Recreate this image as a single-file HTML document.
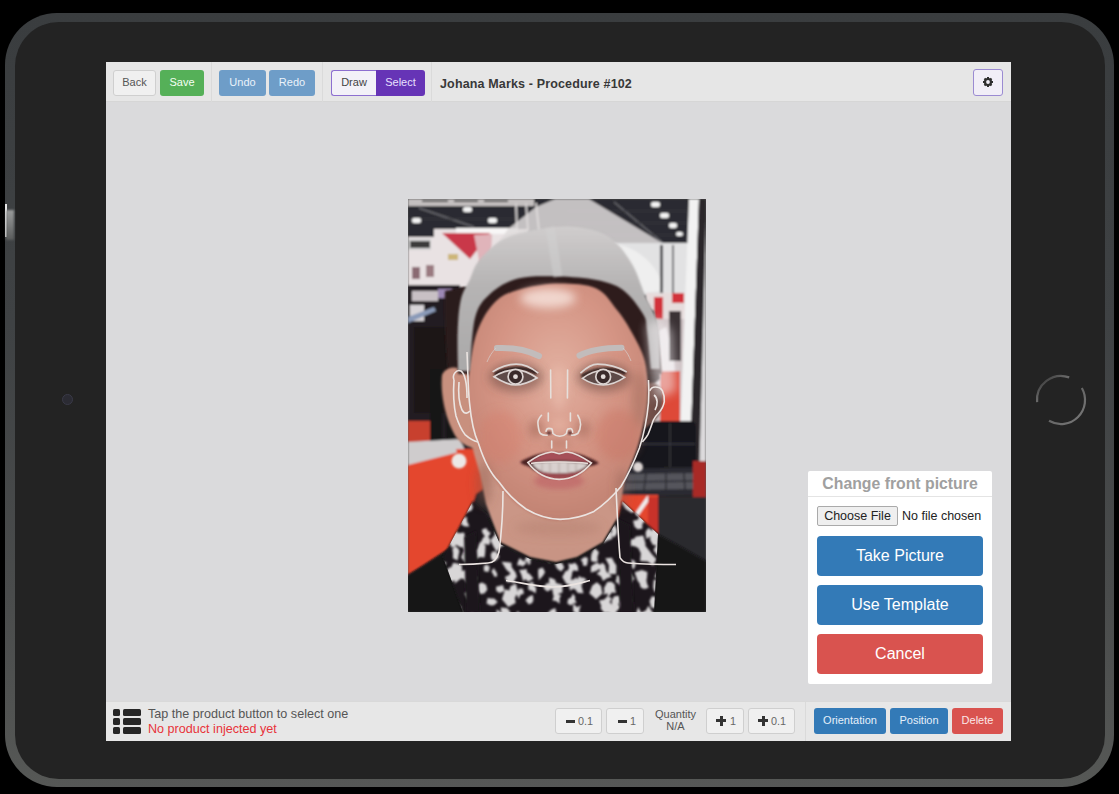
<!DOCTYPE html>
<html><head><meta charset="utf-8">
<style>
*{box-sizing:border-box;margin:0;padding:0}
html,body{width:1119px;height:794px;overflow:hidden;background:#000;font-family:"Liberation Sans",sans-serif}
.abs{position:absolute}
#ipad{position:absolute;left:5px;top:13px;width:1109px;height:774px;border-radius:52px;background:linear-gradient(#3a3d3f,#3f4244 40%,#4a4c4c 75%,#565856);}
#bezel{position:absolute;left:9.5px;top:8.5px;right:9.5px;bottom:8.5px;border-radius:44px;background:#232323}
#screen{position:absolute;left:106px;top:62px;width:905px;height:679px;background:#dadadc;overflow:hidden}
#tb{position:absolute;left:0;top:0;width:905px;height:40px;background:#e6e6e6;border-bottom:1px solid #d6d6d6}
#bb{position:absolute;left:0;top:638.5px;width:905px;height:40.5px;background:#e7e7e7;border-top:1px solid #d9d9d9}
.btn{position:absolute;height:26px;border-radius:3px;font-size:11px;line-height:26px;text-align:center;white-space:nowrap}
.def{background:#f0f0f0;border:1px solid #cfcfcf;color:#555}
.mi{position:absolute;top:11px;width:9px;height:3px;background:#333}
.pl{position:absolute;top:7px;width:10px;height:10px;background:linear-gradient(#333,#333) center/10px 3px no-repeat,linear-gradient(#333,#333) center/3px 10px no-repeat}
.bt{position:absolute;top:0;font-size:10.8px;line-height:25px;color:#666}
.sep{position:absolute;top:0;width:1px;height:40px;background:#dadada}
</style></head><body>
<div id="ipad"><div id="bezel"></div></div>
<div class="abs" style="left:5px;top:204px;width:1.5px;height:33px;background:#e8e8e8"></div>
<div class="abs" style="left:6px;top:210px;width:8px;height:30px;background:linear-gradient(#9a9c9c,#5a5c5c);filter:blur(1px)"></div>
<!-- camera -->
<div class="abs" style="left:62px;top:394px;width:11px;height:11px;border-radius:50%;background:#2b2b33;border:1px solid #3a3a48"></div>
<!-- home button -->
<svg class="abs" style="left:1031px;top:370px" width="60" height="60" viewBox="0 0 60 60"><defs><linearGradient id="hg" x1="0" y1="0" x2="1" y2="1"><stop offset="0" stop-color="#777" stop-opacity="0"/><stop offset="0.45" stop-color="#666"/><stop offset="1" stop-color="#7a7a7a"/></linearGradient></defs><path d="M6.1 32.1 A24 24 0 0 1 38.2 7.4" stroke="url(#hg)" stroke-width="2.2" fill="none" style="filter:blur(0.4px)"/><path d="M50.8 18.0 A24 24 0 0 1 18.0 50.8" stroke="url(#hg)" stroke-width="2.2" fill="none" style="filter:blur(0.4px)"/></svg>

<div id="screen">
  <div id="tb">
    <div class="btn def" style="left:7px;top:8px;width:43px;line-height:23px">Back</div>
    <div class="btn" style="left:54px;top:8px;width:44px;line-height:25px;background:#55b058;color:#f4fff4">Save</div>
    <div class="sep" style="left:105px"></div>
    <div class="btn" style="left:113px;top:8px;width:47px;line-height:25px;background:#6e9dc8;color:#eaf2fa">Undo</div>
    <div class="btn" style="left:163px;top:8px;width:46px;line-height:25px;background:#6e9dc8;color:#eaf2fa">Redo</div>
    <div class="sep" style="left:216px"></div>
    <div class="btn" style="left:225px;top:8px;width:45px;line-height:23px;background:#f3f1f8;border:1px solid #8d6fd0;border-right:none;border-radius:3px 0 0 3px;color:#444">Draw</div>
    <div class="btn" style="left:270px;top:8px;width:49px;line-height:25px;background:#6634b6;border-radius:0 3px 3px 0;color:#e8e0ff">Select</div>
    <div class="sep" style="left:325px"></div>
    <div class="abs" style="left:334px;top:15px;font-size:12.5px;letter-spacing:0.15px;font-weight:bold;color:#383838;white-space:nowrap">Johana Marks - Procedure #102</div>
    <div class="btn" style="left:867px;top:7px;width:30px;height:27px;background:#f1eef7;border:1.5px solid #9b8bd2;border-radius:3px"><svg width="12" height="12" viewBox="0 0 12 12" style="position:absolute;left:8px;top:5.5px"><g fill="#2e2e2e"><rect x="5" y="1" width="2" height="2.6" transform="rotate(0 6 6)"/><rect x="5" y="1" width="2" height="2.6" transform="rotate(45 6 6)"/><rect x="5" y="1" width="2" height="2.6" transform="rotate(90 6 6)"/><rect x="5" y="1" width="2" height="2.6" transform="rotate(135 6 6)"/><rect x="5" y="1" width="2" height="2.6" transform="rotate(180 6 6)"/><rect x="5" y="1" width="2" height="2.6" transform="rotate(225 6 6)"/><rect x="5" y="1" width="2" height="2.6" transform="rotate(270 6 6)"/><rect x="5" y="1" width="2" height="2.6" transform="rotate(315 6 6)"/><circle cx="6" cy="6" r="4.1"/></g><circle cx="6" cy="6" r="1.9" fill="#f1eef7"/></svg></div>
  </div>

  <div id="photo" class="abs" style="left:302px;top:137px;width:298px;height:413px;background:#555;overflow:hidden"><svg width="298" height="413" viewBox="0 0 298 413" style="position:absolute;left:0;top:0">
<defs>
<filter id="b1" x="-10%" y="-10%" width="120%" height="120%"><feGaussianBlur stdDeviation="1.1"/></filter>
<filter id="b2" x="-30%" y="-30%" width="160%" height="160%"><feGaussianBlur stdDeviation="5"/></filter>
<filter id="b3" x="-30%" y="-30%" width="160%" height="160%"><feGaussianBlur stdDeviation="2.5"/></filter>
<radialGradient id="skinG" cx="0.5" cy="0.38" r="0.7">
<stop offset="0" stop-color="#e2b0a0"/><stop offset="0.5" stop-color="#d49484"/><stop offset="1" stop-color="#bc7e6e"/>
</radialGradient>
<linearGradient id="neckG" x1="0" y1="0" x2="0" y2="1">
<stop offset="0" stop-color="#c08a7a"/><stop offset="0.45" stop-color="#cc9888"/><stop offset="1" stop-color="#c89484"/>
</linearGradient>
<linearGradient id="capG" x1="0" y1="0" x2="0" y2="1">
<stop offset="0" stop-color="#d0cdcd"/><stop offset="0.4" stop-color="#b6b4b4"/><stop offset="1" stop-color="#aaa9a9"/>
</linearGradient>
<clipPath id="colc"><path d="M35 358 L65 302 L78 314 L92 345 L122 360 L148 365 L169 360 L195 345 L210 320 L214 302 L250 335 L246 413 L55 413 Z"/></clipPath>
</defs>
<g filter="url(#b1)">
<rect x="0" y="0" width="298" height="413" fill="#262325"/>
<!-- ceiling -->
<rect x="0" y="0" width="298" height="48" fill="#2c2c31"/>
<rect x="0" y="0" width="126" height="7" fill="#c4c0c0"/>
<path d="M14 2 L40 2 M46 2 L70 2 M76 2 L100 2" stroke="#4a4848" stroke-width="2"/>
<path d="M11 9 L66 28 M206 3 L256 45" stroke="#6a6a70" stroke-width="1.4"/>
<path d="M0 20 L120 20 M0 36 L120 36 M160 12 L280 12 M160 24 L280 24 M160 36 L280 36" stroke="#3a3a40" stroke-width="1"/>
<g fill="#f4f4f4">
<rect x="4" y="19" width="9" height="5" rx="2"/><rect x="55" y="8" width="9" height="5" rx="2"/><rect x="80" y="19" width="9" height="5" rx="2"/>
<rect x="243" y="3" width="9" height="5" rx="2"/><rect x="252" y="14" width="9" height="5" rx="2"/><rect x="261" y="24" width="8" height="5" rx="2"/><rect x="268" y="33" width="7" height="4" rx="2"/>
</g>
<!-- truss -->
<path d="M108 4 L109 32 M118 4 L120 32 M128 4 L131 32" stroke="#d4d0d0" stroke-width="2"/>
<!-- left booth wall -->
<rect x="0" y="30" width="120" height="58" fill="#e9e2e3"/>
<rect x="48" y="29" width="62" height="6" fill="#f8f6f6"/>
<rect x="0" y="30" width="26" height="8" fill="#2c2c31"/>
<rect x="0" y="40" width="23" height="11" fill="#d2d2d2"/>
<rect x="2" y="42" width="20" height="7" fill="#3a3a3a"/>
<path d="M34 34 L82 34 L62 60 Z" fill="#c9384a"/>
<path d="M66 36 L84 35 L83 62 L72 66 Z" fill="#e0b4ba"/>
<rect x="4" y="68" width="8" height="12" fill="#8a6a72"/>
<rect x="18" y="66" width="8" height="12" fill="#9a7a80"/>
<rect x="40" y="55" width="10" height="6" fill="#cdb678"/>
<!-- halo over ceiling -->
<path d="M86 50 L100 30 L128 8 L147 0 L181 0 L256 45 L256 90 L86 90 Z" fill="#dedadb" opacity="0.85"/>
<!-- left rack dark -->
<rect x="0" y="86" width="52" height="172" fill="#241f22"/>
<rect x="4" y="92" width="26" height="10" fill="#c8c0c4"/>
<rect x="30" y="90" width="14" height="9" fill="#9c88b4"/>
<rect x="2" y="106" width="14" height="16" fill="#d8d4d8"/>
<path d="M0 118 L26 108 L28 112 L0 124 Z" fill="#8a9ab8"/>
<rect x="6" y="128" width="44" height="86" fill="#1a1719"/>
<rect x="0" y="222" width="24" height="22" fill="#c8402e"/>
<rect x="22" y="170" width="12" height="84" fill="#141213"/>
<rect x="38" y="170" width="12" height="84" fill="#141213"/>
<!-- floor -->
<path d="M0 243 L52 240 L58 254 L0 270 Z" fill="#cfcccd"/>
<path d="M0 266 L55 252 L71 286 L63 310 L42 349 L16 366 L0 376 Z" fill="#e4472f"/>
<path d="M48 250 L75 250 L75 290 L60 300 Z" fill="#e4472f"/>
<!-- right hall -->
<rect x="205" y="44" width="78" height="52" fill="#e2e2e3"/>
<path d="M205 44 C235 50 252 70 256 92 L205 96 Z" fill="#efefef"/>
<rect x="252" y="46" width="3" height="50" fill="#4a4a4e"/>
<rect x="264" y="46" width="2" height="50" fill="#6a6a6e"/>
<rect x="238" y="94" width="40" height="30" fill="#e6dcdc"/>
<rect x="246" y="98" width="9" height="26" fill="#d2333a"/>
<rect x="264" y="94" width="12" height="10" fill="#d2333a"/>
<rect x="238" y="120" width="40" height="104" fill="#cfc4c6"/>
<path d="M240 138 L258 128 L266 160 L268 192 L244 200 Z" fill="#eeeaec"/>
<rect x="261" y="112" width="12" height="50" fill="#3a3236"/>
<rect x="252" y="172" width="20" height="54" fill="#de4a38"/>
<!-- pillar -->
<path d="M281 0 L291 0 L282 262 L271 262 Z" fill="#f2f2f2"/>
<path d="M291 0 L298 0 L298 20 L291.5 262 L282 262 Z" fill="#2c282b"/>
<path d="M298 20 L298 262 L291.5 262 Z" fill="#dcdadc"/>
<!-- chair -->
<path d="M230 226 C232 222 236 222 240 222 L282 222 C286 222 288 224 288 228 L288 270 L224 270 Z" fill="#19191c"/>
<path d="M262 224 L262 268 M232 245 L287 245" stroke="#3a3a40" stroke-width="1.4"/>
<path d="M216 270 L289 268 L290 296 L212 298 Z" fill="#2a2a30"/>
<path d="M220 275 L288 274 L289 290 L216 291 Z" fill="#54545c"/>
<path d="M238 274 L236 291 M258 274 L258 291 M276 274 L277 291 M218 283 L289 282" stroke="#2c2c32" stroke-width="1.5"/>
<rect x="285" y="262" width="13" height="38" fill="#a82a28"/>
<!-- right floor -->
<rect x="209" y="296" width="41" height="40" fill="#e4472f"/>
<path d="M222 325 L241 298" stroke="#f0f0f0" stroke-width="4"/>
<rect x="240" y="298" width="10" height="38" fill="#c9302a"/>
<rect x="250" y="298" width="48" height="64" fill="#29292d"/>
</g>
<!-- hair back -->
<g filter="url(#b1)">
<path d="M37 92 C36 120 38 150 40 175 L62 175 L66 120 L58 88 Z" fill="#2c1c1c"/>
<path d="M229 105 L246 112 L252 180 L240 190 L232 150 Z" fill="#2c1c1c"/>
</g>
<!-- black jacket -->
<g filter="url(#b1)">
<path d="M0 376 L16 366 L42 349 L65 312 L100 330 L150 362 L212 318 L240 330 L270 346 L298 362 L298 413 L0 413 Z" fill="#141315"/>
</g>
<!-- neck -->
<g filter="url(#b1)">
<path d="M60 228 L66 255 L72 275 L78 305 L92 343 L122 358 L148 363 L169 358 L195 343 L210 318 L215 292 L222 250 Z" fill="url(#neckG)"/>
</g>
<!-- collar -->
<g filter="url(#b1)">
<path d="M35 358 L65 302 L78 314 L92 345 L122 360 L148 365 L169 360 L195 345 L210 320 L214 302 L250 335 L246 413 L55 413 Z" fill="#1b191b"/>
</g>
<g clip-path="url(#colc)"><g fill="#d8d6d7" filter="url(#b1)"><path d="M35.0 288.3 L35.3 297.2 L32.0 300.6 L28.2 301.2 L24.7 296.7 L26.2 287.2 Z"/><path d="M22.5 313.5 L18.2 309.2 L20.3 303.4 L18.1 297.5 L23.4 299.2 L27.4 296.7 L27.4 302.1 L26.6 304.7 L28.1 312.1 Z"/><path d="M35.9 350.8 L29.7 344.7 L22.0 342.3 L27.2 335.4 L31.8 335.9 L36.5 335.5 L41.2 342.7 Z"/><path d="M35.4 369.1 L32.7 371.7 L28.5 374.1 L27.8 368.4 L26.4 364.3 L29.9 362.9 L32.8 362.4 L38.6 363.4 Z"/><path d="M22.8 382.1 L24.1 377.5 L24.2 375.3 L25.5 373.1 L29.5 368.3 L29.7 375.0 L33.1 378.7 L31.3 384.3 L26.3 386.3 Z"/><path d="M19.9 385.2 L26.7 384.0 L30.7 387.6 L31.3 393.8 L26.2 401.2 L22.9 392.6 Z"/><path d="M25.3 402.4 L23.8 398.9 L25.2 396.2 L27.7 395.5 L31.8 397.7 L30.7 404.8 Z"/><path d="M42.2 300.8 L44.0 303.7 L42.3 306.3 L42.2 312.0 L39.4 307.3 L36.4 306.6 L35.3 301.9 L39.6 302.1 Z"/><path d="M47.1 324.8 L42.8 322.6 L38.9 319.2 L42.7 315.4 L49.0 310.2 L51.4 319.4 Z"/><path d="M43.6 348.6 L42.2 345.6 L40.8 342.7 L41.2 336.8 L46.3 336.2 L49.0 340.8 L48.9 345.3 L46.5 347.7 Z"/><path d="M41.2 368.6 L46.9 368.2 L48.6 374.5 L50.4 380.3 L45.3 381.9 L41.2 383.1 L36.3 379.8 L37.1 372.9 Z"/><path d="M40.3 405.6 L39.0 403.8 L38.4 400.9 L40.3 398.2 L42.8 399.7 L44.0 401.9 L44.1 404.4 L43.0 408.6 Z"/><path d="M53.5 409.0 L49.8 414.7 L46.3 418.2 L42.7 415.3 L36.7 415.7 L35.1 408.6 L40.3 404.9 L44.4 401.6 L49.4 403.7 Z"/><path d="M46.9 303.2 L42.3 301.4 L44.7 296.0 L43.3 289.4 L48.6 292.4 L52.4 291.3 L54.7 295.4 L51.8 298.9 L51.2 304.5 Z"/><path d="M61.4 327.4 L56.8 327.5 L53.5 325.8 L53.4 321.7 L55.5 319.1 L59.0 317.8 L59.0 322.3 Z"/><path d="M56.0 333.4 L57.6 339.3 L59.2 346.8 L52.9 348.5 L48.8 346.3 L46.2 343.5 L44.2 338.9 L44.7 331.3 L50.9 334.3 Z"/><path d="M45.0 353.9 L44.4 350.0 L47.2 347.0 L50.3 349.5 L51.5 352.3 L50.8 355.1 L49.7 361.5 L44.9 359.3 Z"/><path d="M45.2 363.7 L50.4 364.7 L53.8 366.2 L54.0 370.3 L53.1 373.7 L50.1 379.6 L46.9 373.9 L42.5 369.9 Z"/><path d="M52.9 379.6 L46.5 384.7 L47.7 376.7 L44.5 369.7 L51.5 370.9 L54.1 371.8 L59.8 370.9 L62.8 377.8 L56.1 380.1 Z"/><path d="M52.4 411.0 L54.3 412.2 L54.5 414.7 L56.6 419.7 L52.3 418.5 L49.4 419.4 L47.9 416.2 L47.3 412.5 L49.6 409.7 Z"/><path d="M56.0 292.3 L60.0 294.0 L62.6 293.2 L65.4 296.1 L64.6 301.2 L60.4 299.8 L58.8 298.5 L55.5 297.0 Z"/><path d="M60.7 303.5 L63.4 304.5 L65.0 307.9 L63.6 311.4 L60.8 312.6 L57.2 313.9 L56.7 309.3 L56.7 306.4 L57.3 302.1 Z"/><path d="M53.9 341.4 L57.7 339.1 L61.2 340.1 L62.9 343.1 L66.5 346.7 L64.9 352.8 L59.7 355.7 L55.9 350.9 L54.4 346.5 Z"/><path d="M60.8 350.5 L61.6 355.7 L63.3 360.8 L57.8 363.9 L53.1 358.4 L55.8 351.9 Z"/><path d="M69.3 379.1 L65.3 385.1 L60.4 384.7 L57.3 382.0 L53.2 375.3 L60.3 375.3 L63.9 375.0 Z"/><path d="M65.3 385.2 L67.8 390.7 L69.2 394.7 L65.8 396.6 L61.6 395.6 L61.8 390.1 Z"/><path d="M56.5 394.1 L61.7 392.3 L67.9 389.5 L68.8 397.4 L65.3 401.3 L62.1 401.2 L59.0 399.8 Z"/><path d="M56.6 420.6 L58.5 416.6 L61.0 415.3 L64.2 413.3 L68.2 416.4 L64.6 420.5 L64.3 428.5 L58.9 425.3 Z"/><path d="M75.9 289.8 L82.9 291.3 L77.3 296.7 L73.7 298.5 L65.3 296.4 L69.4 286.7 Z"/><path d="M76.0 335.9 L74.5 334.0 L73.8 330.8 L76.4 329.6 L78.7 329.3 L79.7 331.7 L82.8 334.0 L80.7 337.2 L77.9 339.3 Z"/><path d="M79.2 336.4 L81.8 339.7 L82.2 342.7 L81.3 346.1 L78.5 345.3 L72.2 344.8 L75.2 338.5 Z"/><path d="M68.3 360.3 L67.0 355.8 L63.8 351.2 L69.1 350.2 L72.0 343.0 L77.5 346.3 L77.2 353.2 L76.5 358.5 L71.9 358.1 Z"/><path d="M76.0 372.2 L75.7 367.5 L77.7 365.7 L79.5 366.0 L81.8 368.0 L80.6 372.9 Z"/><path d="M79.3 390.8 L76.3 394.4 L72.2 394.9 L69.6 390.9 L69.5 385.1 L74.2 383.4 L78.1 385.7 Z"/><path d="M73.2 422.6 L70.6 421.8 L66.3 420.5 L66.8 414.4 L71.6 414.4 L75.4 415.3 L76.3 420.1 Z"/><path d="M91.8 285.9 L88.8 291.4 L87.8 298.5 L83.3 293.2 L79.1 292.0 L77.8 285.8 L82.0 281.3 L87.1 282.5 Z"/><path d="M88.6 303.2 L86.7 310.4 L85.0 316.2 L79.5 314.1 L80.3 308.3 L82.6 305.2 Z"/><path d="M83.3 307.4 L90.6 308.2 L93.4 311.2 L97.8 315.3 L94.1 320.9 L88.1 321.9 L85.3 315.8 Z"/><path d="M95.5 329.0 L95.0 334.2 L92.3 336.3 L91.0 339.3 L87.3 340.1 L87.1 335.4 L86.5 332.4 L88.9 331.3 L91.1 328.7 Z"/><path d="M88.9 352.9 L85.7 347.9 L82.4 341.3 L87.5 334.9 L95.4 335.7 L99.4 344.3 L92.4 348.2 Z"/><path d="M84.3 352.4 L87.5 352.4 L89.4 354.5 L91.3 357.7 L89.0 360.6 L85.9 362.6 L83.3 359.6 L82.7 355.8 Z"/><path d="M89.2 377.6 L86.3 377.8 L85.2 375.3 L83.4 372.5 L85.7 369.0 L87.9 372.6 L89.0 374.2 Z"/><path d="M91.7 394.1 L88.3 392.0 L88.0 387.7 L91.0 386.9 L95.0 386.0 L96.6 392.1 Z"/><path d="M78.5 404.6 L79.5 399.0 L83.7 399.5 L86.2 399.6 L89.7 403.1 L86.0 406.2 L82.7 406.5 Z"/><path d="M88.2 416.3 L88.8 410.3 L92.6 413.2 L93.1 416.9 L98.3 420.7 L92.2 420.9 L90.2 425.1 L87.1 422.7 L83.4 419.2 Z"/><path d="M97.6 285.4 L99.8 289.1 L102.6 292.3 L100.6 296.8 L96.7 297.5 L92.7 296.3 L95.0 291.5 L94.6 288.0 Z"/><path d="M97.7 306.2 L93.5 309.3 L89.7 303.2 L94.9 300.0 L99.6 297.0 L100.2 303.5 Z"/><path d="M102.3 315.3 L105.7 311.5 L109.5 314.8 L111.7 320.6 L105.7 321.9 L103.9 328.0 L99.4 325.7 L97.6 320.8 L98.2 315.8 Z"/><path d="M94.1 327.3 L100.4 323.5 L106.5 323.6 L109.0 331.5 L103.7 336.6 L98.7 333.6 Z"/><path d="M103.6 367.9 L107.9 374.2 L101.6 373.5 L99.2 371.6 L97.6 369.4 L93.6 362.8 L99.9 363.2 L103.5 363.7 Z"/><path d="M96.8 378.1 L101.6 375.7 L103.8 369.5 L107.6 373.7 L108.9 377.7 L106.6 380.4 L106.2 384.2 L103.4 383.1 L99.2 383.2 Z"/><path d="M107.8 384.5 L109.7 391.5 L107.3 398.8 L102.2 394.6 L101.4 390.9 L102.4 387.2 Z"/><path d="M97.2 390.2 L104.4 392.4 L106.5 396.9 L107.7 404.1 L100.3 408.0 L93.9 400.2 Z"/><path d="M97.9 417.8 L93.7 415.6 L92.6 408.4 L98.7 409.1 L101.0 411.0 L102.2 413.6 L102.2 418.9 Z"/><path d="M108.4 287.5 L112.1 285.8 L116.1 289.7 L115.2 296.8 L109.4 296.1 L104.3 298.0 L102.6 291.9 L102.6 285.2 Z"/><path d="M114.4 315.4 L116.6 314.4 L118.5 316.8 L119.3 321.2 L115.6 322.6 L112.8 320.5 L112.4 317.1 Z"/><path d="M104.2 340.2 L105.3 333.1 L107.5 329.1 L111.1 330.8 L116.1 335.7 L111.4 343.0 Z"/><path d="M113.5 350.9 L108.5 351.5 L103.8 348.6 L105.8 342.4 L111.0 337.7 L116.4 343.7 Z"/><path d="M119.0 363.9 L116.2 365.9 L114.8 367.7 L113.1 366.4 L109.1 366.2 L110.1 362.2 L111.7 358.9 L114.6 361.4 L115.9 362.2 Z"/><path d="M113.3 375.7 L111.2 371.0 L115.7 370.5 L118.6 370.0 L119.2 373.5 L119.6 377.9 L115.2 382.3 Z"/><path d="M112.3 396.1 L110.7 400.3 L109.2 396.2 L105.9 394.2 L109.6 392.7 L111.0 389.6 L114.9 389.8 L116.0 394.5 Z"/><path d="M112.6 415.8 L112.3 420.9 L108.1 420.9 L107.3 417.6 L107.4 415.2 L110.0 411.9 Z"/><path d="M128.7 304.5 L122.4 304.1 L120.4 295.7 L126.0 289.5 L131.5 294.2 L135.3 301.3 Z"/><path d="M114.8 320.1 L114.5 313.2 L119.8 312.8 L123.1 312.5 L124.0 316.2 L123.5 320.3 L120.0 320.4 Z"/><path d="M119.3 323.9 L123.0 322.4 L123.3 327.2 L122.4 333.0 L116.4 332.7 L115.4 325.9 Z"/><path d="M125.3 340.8 L125.8 342.8 L124.9 345.4 L122.5 344.7 L119.3 343.8 L120.6 340.2 L121.8 336.4 L124.5 339.1 Z"/><path d="M131.4 358.5 L128.3 359.5 L123.8 358.4 L125.7 353.1 L129.2 351.9 L133.5 353.7 Z"/><path d="M122.7 364.2 L120.5 366.2 L119.4 362.7 L116.1 362.3 L117.6 359.4 L119.1 357.3 L121.6 356.8 L124.2 358.3 L122.2 361.5 Z"/><path d="M115.4 375.0 L119.0 373.7 L121.5 374.8 L125.5 379.6 L120.2 382.7 L116.7 379.5 Z"/><path d="M120.2 385.3 L124.4 382.5 L126.7 386.8 L128.2 389.4 L127.7 394.3 L124.0 391.9 L120.4 390.7 Z"/><path d="M117.4 401.3 L120.9 397.6 L124.9 396.1 L125.4 401.0 L124.2 403.9 L120.8 405.5 Z"/><path d="M133.0 301.5 L127.4 295.3 L129.2 288.1 L134.2 283.5 L137.6 289.5 L137.4 294.8 Z"/><path d="M130.2 307.2 L134.5 306.0 L136.8 307.6 L139.2 309.8 L138.5 314.4 L134.6 315.2 L131.2 312.6 Z"/><path d="M128.7 314.5 L130.1 308.7 L132.7 314.2 L133.7 316.1 L136.6 319.5 L132.6 320.0 L130.8 320.2 L127.7 320.6 L125.7 317.1 Z"/><path d="M143.4 331.5 L138.3 330.7 L135.2 329.5 L135.6 325.8 L133.0 319.8 L138.0 318.9 L143.7 318.7 L143.6 325.5 Z"/><path d="M130.3 369.9 L134.7 368.6 L137.1 373.1 L135.0 376.8 L130.8 381.3 L130.1 374.5 Z"/><path d="M140.0 392.5 L137.8 391.4 L135.4 388.8 L137.4 385.8 L139.4 383.7 L141.8 385.0 L144.5 386.3 L144.9 390.0 L141.8 391.1 Z"/><path d="M155.1 290.6 L157.0 297.6 L150.8 297.0 L148.8 292.7 L147.4 286.4 L153.7 282.8 Z"/><path d="M142.9 306.6 L146.0 306.6 L147.3 310.0 L145.7 312.6 L143.9 313.7 L140.1 316.4 L139.3 311.6 L138.2 306.2 Z"/><path d="M149.2 338.5 L145.7 339.5 L143.4 337.7 L138.8 337.4 L140.3 332.7 L142.9 330.8 L145.6 327.1 L151.3 327.2 L153.8 334.0 Z"/><path d="M149.0 348.1 L144.0 349.4 L141.0 346.8 L141.5 343.0 L144.0 339.9 L149.0 341.3 Z"/><path d="M142.7 349.8 L145.6 348.9 L151.7 346.5 L153.1 353.5 L148.0 356.7 L146.3 360.2 L141.1 363.8 L138.2 357.8 L140.1 352.4 Z"/><path d="M150.9 363.6 L154.1 364.1 L156.3 368.6 L153.2 372.4 L149.9 370.2 L148.2 368.3 L146.8 363.7 Z"/><path d="M141.1 378.5 L144.7 379.6 L147.4 381.0 L148.2 385.3 L145.2 388.9 L141.7 386.5 L141.0 383.0 Z"/><path d="M150.0 395.0 L145.3 396.8 L144.3 390.4 L147.4 383.7 L154.4 385.7 L154.5 393.6 Z"/><path d="M148.0 401.9 L144.4 401.4 L145.7 397.2 L147.0 395.0 L148.6 389.8 L150.4 395.4 L153.2 396.3 L151.6 399.0 L151.7 404.7 Z"/><path d="M142.2 424.1 L140.6 419.2 L139.7 414.2 L143.0 410.8 L147.3 408.9 L148.6 414.7 L151.2 417.5 L147.7 419.3 L146.8 425.6 Z"/><path d="M169.8 288.0 L166.3 291.4 L164.6 293.3 L161.6 295.4 L158.1 293.2 L158.8 288.5 L161.4 286.7 L163.3 283.7 L168.0 282.7 Z"/><path d="M164.0 298.0 L167.5 300.5 L167.2 304.9 L164.4 309.3 L161.1 305.4 L160.1 300.5 Z"/><path d="M157.8 319.5 L157.6 316.6 L160.1 315.8 L161.5 318.2 L161.8 320.4 L160.8 322.2 L158.5 325.9 L155.2 323.3 Z"/><path d="M161.3 318.8 L164.9 322.8 L165.6 329.2 L161.2 332.8 L157.4 329.2 L151.4 332.2 L148.8 325.7 L154.8 322.5 L157.3 321.9 Z"/><path d="M154.5 342.1 L154.1 340.1 L155.0 338.0 L158.3 335.2 L159.2 339.9 L159.7 344.3 L156.0 343.3 Z"/><path d="M154.2 352.4 L151.0 348.0 L154.0 341.0 L160.9 342.3 L165.7 349.0 L162.4 356.8 L156.1 360.2 Z"/><path d="M163.8 365.0 L167.1 363.7 L169.8 366.9 L170.3 372.1 L165.3 371.6 L162.7 376.5 L158.4 374.1 L161.1 368.7 L160.2 364.4 Z"/><path d="M162.8 381.3 L162.3 386.1 L158.5 384.9 L156.9 382.4 L154.2 377.9 L157.9 371.5 L164.2 374.4 Z"/><path d="M169.1 385.4 L166.2 389.1 L161.9 391.8 L161.3 386.1 L161.9 381.6 L166.6 379.8 Z"/><path d="M167.0 400.7 L168.6 404.1 L165.6 404.3 L162.9 406.5 L159.3 404.6 L160.1 400.0 L163.1 398.6 L164.9 394.5 L167.2 397.7 Z"/><path d="M166.1 300.5 L165.2 293.2 L164.9 286.8 L170.0 288.8 L175.6 291.3 L174.2 300.6 Z"/><path d="M165.9 311.3 L162.6 309.6 L162.1 305.1 L162.5 299.3 L167.3 300.0 L171.8 299.6 L174.0 304.6 L172.2 309.3 L168.4 309.2 Z"/><path d="M175.1 317.5 L172.3 319.0 L168.7 322.0 L166.5 317.6 L168.0 313.8 L166.4 307.4 L171.3 309.2 L175.5 308.7 L176.3 313.7 Z"/><path d="M161.6 329.1 L163.7 324.5 L166.5 322.1 L168.8 324.7 L171.9 326.0 L172.9 331.0 L168.6 331.9 L166.1 330.3 Z"/><path d="M178.4 335.9 L179.4 338.3 L179.1 341.7 L176.3 343.0 L174.6 340.2 L172.9 338.2 L173.2 334.3 L176.4 336.0 Z"/><path d="M175.1 366.7 L174.5 362.9 L172.6 360.8 L174.8 359.3 L176.7 358.1 L179.8 358.8 L179.7 362.6 L178.8 366.8 Z"/><path d="M178.7 381.3 L175.0 383.2 L173.9 385.9 L171.7 384.7 L167.8 384.0 L170.0 380.2 L170.8 376.8 L173.6 378.7 L175.9 378.6 Z"/><path d="M167.1 390.2 L160.6 388.6 L167.1 384.8 L167.0 378.3 L171.2 380.8 L173.2 383.9 L173.5 387.1 L175.5 394.3 L169.8 393.9 Z"/><path d="M172.9 406.2 L171.3 410.7 L171.3 412.9 L170.3 416.8 L167.8 413.9 L165.4 412.9 L165.1 409.7 L165.2 404.5 L169.1 408.2 Z"/><path d="M182.2 316.6 L186.6 318.2 L184.4 323.2 L183.2 326.4 L180.0 327.5 L172.3 328.6 L175.8 320.7 L178.5 317.1 Z"/><path d="M186.3 363.1 L183.0 362.1 L183.0 358.1 L183.6 354.6 L186.6 349.0 L190.9 353.1 L189.4 358.3 L189.8 362.5 Z"/><path d="M182.8 373.4 L183.0 367.4 L186.0 365.2 L189.2 363.4 L192.9 366.4 L190.4 370.7 L187.7 372.2 Z"/><path d="M184.3 386.5 L188.9 383.2 L193.1 387.1 L194.5 394.6 L188.1 400.2 L181.3 394.3 Z"/><path d="M193.6 305.7 L189.6 305.3 L190.2 300.5 L190.2 294.8 L194.3 298.0 L198.7 299.0 L195.7 303.0 Z"/><path d="M201.4 316.0 L203.6 322.1 L198.8 324.4 L196.0 325.5 L192.3 323.6 L192.3 317.9 L196.7 317.7 Z"/><path d="M192.7 336.0 L188.8 331.1 L190.5 324.3 L195.8 325.0 L198.4 328.8 L197.8 334.3 Z"/><path d="M197.1 331.8 L202.4 333.0 L204.4 339.8 L199.0 341.8 L195.5 344.1 L194.2 339.4 L192.5 334.1 Z"/><path d="M192.1 365.5 L194.5 363.7 L197.0 366.3 L198.2 372.8 L192.6 372.3 L190.5 368.4 Z"/><path d="M198.7 373.1 L204.0 377.6 L198.5 379.6 L195.0 381.9 L193.0 377.6 L188.6 374.8 L192.5 371.4 L194.6 367.8 L197.6 370.5 Z"/><path d="M197.8 386.2 L201.1 386.5 L201.6 390.3 L203.4 393.1 L201.7 396.1 L198.9 394.3 L195.6 396.0 L196.3 392.1 L195.9 389.1 Z"/><path d="M193.2 406.9 L191.1 401.6 L196.2 400.5 L199.2 397.4 L203.8 398.9 L201.0 404.6 L203.2 409.6 L199.3 411.5 L195.7 410.1 Z"/><path d="M206.0 408.4 L205.1 415.3 L199.7 413.7 L196.1 414.1 L192.5 408.9 L196.1 402.6 L202.2 403.4 Z"/><path d="M208.8 284.4 L213.7 288.6 L216.2 292.8 L216.3 298.5 L212.1 301.4 L209.1 297.3 L202.5 296.6 L206.8 291.4 Z"/><path d="M208.0 301.9 L209.8 308.2 L204.5 310.2 L201.4 306.4 L197.0 304.3 L195.6 296.4 L202.6 297.3 L206.8 297.0 Z"/><path d="M206.8 325.5 L208.9 330.3 L209.2 333.3 L208.2 336.0 L205.6 338.6 L202.9 336.0 L203.7 332.6 L203.5 328.9 Z"/><path d="M200.4 375.1 L201.0 366.3 L197.3 359.2 L203.9 358.8 L206.2 363.2 L208.4 366.4 L208.2 375.1 Z"/><path d="M208.4 380.2 L208.7 376.5 L211.8 376.8 L213.1 379.7 L215.1 383.4 L212.3 386.3 L209.4 384.0 L207.4 382.6 Z"/><path d="M208.0 394.0 L203.9 393.6 L199.2 399.5 L199.9 391.5 L196.9 387.7 L199.2 383.1 L203.6 382.7 L206.8 385.4 L207.0 389.4 Z"/><path d="M212.3 403.0 L209.1 406.4 L203.9 407.9 L203.8 401.5 L206.2 397.3 L211.4 396.8 Z"/><path d="M208.2 412.7 L208.1 419.3 L203.3 417.2 L201.9 412.9 L200.0 408.2 L204.7 408.3 L208.6 403.5 L212.5 408.2 Z"/><path d="M216.7 298.5 L213.5 296.5 L209.1 293.5 L212.8 289.5 L216.6 286.3 L223.4 288.3 L223.6 297.6 Z"/><path d="M213.6 303.6 L218.8 298.4 L221.7 290.4 L226.2 297.3 L232.4 301.1 L229.9 309.1 L223.9 313.9 L217.7 310.0 Z"/><path d="M220.9 347.8 L219.2 343.9 L221.9 341.3 L224.0 340.0 L226.8 340.4 L227.3 343.7 L227.6 347.8 L224.1 346.8 Z"/><path d="M226.9 362.3 L227.6 365.8 L225.9 370.1 L222.0 368.7 L222.1 364.7 L220.3 359.9 L224.5 360.8 Z"/><path d="M218.3 380.7 L217.2 377.0 L216.8 371.6 L221.4 371.5 L223.2 375.1 L226.4 379.7 L222.4 384.3 Z"/><path d="M219.7 405.2 L218.0 407.8 L214.2 409.1 L211.4 405.0 L214.7 401.5 L216.5 399.7 L219.4 399.2 L224.0 401.5 Z"/><path d="M242.1 295.0 L236.1 296.7 L230.2 294.9 L229.6 287.6 L232.8 281.3 L239.4 280.7 L244.2 286.9 Z"/><path d="M231.4 305.8 L238.4 302.7 L236.3 311.4 L234.5 317.5 L228.2 316.3 L228.3 309.3 Z"/><path d="M232.1 325.2 L229.2 323.6 L230.0 319.9 L231.0 317.7 L232.7 316.3 L236.3 314.3 L237.4 318.5 L236.5 321.9 L234.9 324.5 Z"/><path d="M225.0 321.8 L230.0 320.7 L234.3 323.2 L234.3 329.7 L229.3 330.2 L226.5 327.5 Z"/><path d="M235.3 336.6 L237.7 345.3 L233.3 351.2 L228.7 348.2 L222.9 343.8 L227.9 337.5 Z"/><path d="M236.4 345.1 L238.3 347.9 L241.3 351.7 L237.1 353.1 L233.4 355.0 L230.8 350.5 L233.6 346.9 Z"/><path d="M226.6 373.3 L233.8 370.9 L239.4 372.9 L238.9 379.2 L237.3 383.0 L233.0 386.5 L229.5 381.5 Z"/><path d="M233.8 383.1 L235.3 382.8 L238.4 380.5 L238.9 384.2 L240.7 388.4 L237.1 389.9 L234.4 389.4 L232.3 387.7 L231.9 384.7 Z"/><path d="M234.3 415.8 L238.3 421.2 L233.4 429.3 L224.6 425.6 L227.5 416.5 L230.2 407.9 Z"/><path d="M253.0 291.9 L252.4 295.8 L249.2 296.3 L245.3 299.5 L245.5 293.8 L240.9 289.7 L246.4 288.7 L248.8 287.7 L254.4 285.4 Z"/><path d="M248.9 311.7 L245.6 307.1 L241.9 306.6 L240.7 301.4 L245.3 300.7 L247.4 302.1 L250.1 302.8 L251.7 307.2 Z"/><path d="M251.3 316.5 L249.2 318.8 L246.2 322.2 L243.5 318.2 L243.4 313.2 L247.2 311.7 L250.3 312.9 Z"/><path d="M240.8 328.7 L244.2 332.2 L242.8 337.3 L238.5 339.9 L237.6 334.5 L238.1 331.7 Z"/><path d="M252.2 329.7 L252.8 335.7 L250.7 339.2 L250.4 346.3 L244.9 346.1 L242.1 341.0 L242.5 336.3 L243.7 332.2 L247.0 325.8 Z"/><path d="M244.1 355.6 L248.4 360.2 L244.9 366.8 L239.9 362.5 L232.1 362.1 L233.0 352.2 L240.7 351.0 Z"/><path d="M250.6 391.8 L246.6 393.0 L245.2 388.5 L245.3 385.4 L245.8 380.8 L249.8 380.9 L253.2 383.5 L252.2 388.0 Z"/><path d="M249.9 409.5 L243.1 408.5 L241.5 401.9 L243.9 397.2 L248.1 397.9 L249.9 401.9 Z"/><path d="M239.1 421.2 L234.9 419.0 L233.6 413.4 L237.8 411.4 L240.4 406.8 L243.0 411.1 L245.7 415.0 L242.3 418.1 Z"/><path d="M252.4 291.6 L255.0 294.3 L257.1 296.4 L256.4 300.4 L252.9 301.3 L249.1 299.5 L251.6 295.5 Z"/><path d="M267.4 310.5 L262.7 316.2 L257.1 316.5 L251.5 310.6 L256.9 304.3 L263.1 303.9 Z"/><path d="M267.4 317.6 L260.3 320.4 L258.4 322.1 L255.0 323.7 L249.4 321.8 L251.0 315.2 L255.1 312.9 L258.2 313.4 L261.3 314.0 Z"/><path d="M258.0 347.3 L258.6 353.5 L254.1 355.4 L249.5 356.5 L245.5 351.2 L248.7 345.1 L253.5 346.8 Z"/><path d="M262.4 384.2 L253.8 382.1 L246.6 378.0 L250.8 369.6 L256.8 369.7 L259.6 374.2 Z"/><path d="M262.1 390.7 L260.6 394.1 L256.8 394.3 L254.8 390.4 L255.4 386.3 L258.0 383.8 L261.8 383.2 L263.4 387.4 Z"/><path d="M259.5 410.0 L255.6 412.4 L252.4 414.5 L250.6 410.7 L247.0 404.1 L253.3 403.0 L255.9 407.0 Z"/></g></g>
<g filter="url(#b1)">
<path d="M56 338 L68 332 L72 413 L58 413 Z" fill="#1b191b"/>
<path d="M210 320 L222 326 L226 413 L212 413 Z" fill="#1b191b"/>
</g>
<!-- ears -->
<g filter="url(#b1)">
<path d="M62 178 C56 168 40 164 34 176 C32 196 38 222 48 238 C54 246 64 250 72 250 Z" fill="#c8907e"/>
<path d="M237 186 C246 180 256 186 255 202 C254 214 248 222 236 230 Z" fill="#6e4e46"/>
</g>
<!-- hair band -->
<g filter="url(#b1)"><path d="M50.0 175.0 C50.0 167.5 48.0 143.3 50.0 130.0 C52.0 116.7 55.3 104.3 62.0 95.0 C68.7 85.7 77.0 78.5 90.0 74.0 C103.0 69.5 122.5 68.0 140.0 68.0 C157.5 68.0 179.7 69.5 195.0 74.0 C210.3 78.5 223.2 85.7 232.0 95.0 C240.8 104.3 244.3 116.7 248.0 130.0 C251.7 143.3 253.0 167.5 254.0 175.0 Z" fill="#2e1c1b"/></g>
<!-- face -->
<g filter="url(#b1)">
<path d="M69.0 133.0 C73.5 120.8 80.3 109.2 88.0 102.0 C95.7 94.8 104.3 92.4 115.0 89.5 C125.7 86.6 139.8 84.5 152.0 84.5 C164.2 84.5 179.0 85.1 188.5 89.5 C198.0 93.9 203.2 103.9 209.0 111.0 C214.8 118.1 218.3 123.4 223.0 132.0 C227.7 140.6 234.3 151.3 237.0 162.5 C239.7 173.7 239.7 186.8 239.0 199.0 C238.3 211.2 235.8 224.1 233.0 235.6 C230.2 247.1 226.2 258.6 222.0 268.0 C217.8 277.4 214.5 284.3 208.0 292.0 C201.5 299.7 192.7 309.0 183.0 314.0 C173.3 319.0 160.5 322.2 150.0 322.0 C139.5 321.8 129.2 318.0 120.0 313.0 C110.8 308.0 102.0 300.0 95.0 292.0 C88.0 284.0 82.8 274.5 78.0 265.0 C73.2 255.5 68.8 245.0 66.0 235.0 C63.2 225.0 61.8 215.0 61.0 205.0 C60.2 195.0 59.7 187.0 61.0 175.0 C62.3 163.0 64.5 145.2 69.0 133.0 Z" fill="url(#skinG)"/>
</g>
<g filter="url(#b2)">
<ellipse cx="140" cy="99" rx="28" ry="10" fill="#f6e2da" opacity="0.85"/>
<ellipse cx="92" cy="238" rx="22" ry="26" fill="#d47866" opacity="0.35"/>
<ellipse cx="210" cy="236" rx="22" ry="26" fill="#c87060" opacity="0.4"/>
<ellipse cx="108" cy="178" rx="27" ry="15" fill="#6e4a42" opacity="0.55"/>
<ellipse cx="196" cy="178" rx="27" ry="15" fill="#6e4a42" opacity="0.55"/>
<ellipse cx="150" cy="329" rx="44" ry="8" fill="#a87868" opacity="0.3"/><ellipse cx="76" cy="285" rx="8" ry="22" fill="#8a5a4c" opacity="0.4"/><ellipse cx="214" cy="290" rx="6" ry="20" fill="#8a5a4c" opacity="0.35"/>
<ellipse cx="232" cy="200" rx="8" ry="28" fill="#a06c5c" opacity="0.45"/>
</g>

<!-- cap -->
<g filter="url(#b1)">
<path d="M50.0 172.0 C50.0 165.2 49.2 143.0 49.7 131.0 C50.2 119.0 51.0 108.3 53.0 100.0 C55.0 91.7 58.5 87.6 61.6 81.0 C64.7 74.4 65.6 67.7 71.8 60.6 C78.0 53.5 86.5 43.9 99.0 38.5 C111.5 33.1 133.5 29.4 147.0 28.0 C160.5 26.6 170.3 27.8 180.0 30.0 C189.7 32.2 197.6 35.0 205.0 41.0 C212.4 47.0 219.3 56.8 224.6 66.0 C229.9 75.2 233.8 89.1 237.0 96.4 C240.2 103.7 241.7 104.2 244.0 110.0 C246.3 115.8 249.7 121.0 251.0 131.0 C252.3 141.0 251.8 163.5 252.0 170.0 L243.0 170.0 C242.3 163.5 240.3 140.2 239.0 131.0 C237.7 121.8 239.0 121.7 235.0 115.0 C231.0 108.3 222.8 96.7 215.0 91.0 C207.2 85.3 199.3 83.2 188.5 81.0 C177.7 78.8 163.1 77.8 150.0 77.5 C136.9 77.2 121.3 76.6 110.0 79.5 C98.7 82.4 89.2 88.4 82.0 95.0 C74.8 101.6 70.3 106.2 67.0 119.0 C63.7 131.8 62.8 163.2 62.0 172.0 Z" fill="url(#capG)"/>
<path d="M142 28 L150 78" stroke="#d2d2d2" stroke-width="9" opacity="0.5"/>
</g>
<g filter="url(#b2)"><path d="M238 126 L252 120 L264 132 L268 192 L248 200 L242 172 Z" fill="#f2eef0" opacity="0.55"/></g>
<!-- eyebrows -->
<g stroke="#c2bcbb" stroke-width="6" stroke-linecap="round" fill="none">
<path d="M89 149 C100 148.5 116 149 131 157"/>
<path d="M171.5 156.5 C180 152 195 149 213.5 148.8"/>
</g>
<g stroke="#d8d0ce" stroke-width="1" fill="none" opacity="0.7">
<path d="M88 149 C84 153 81 158 79 163"/><path d="M215 149 C219 153 221 157 223 162"/>
</g>
<!-- eyes -->
<g filter="url(#b1)" fill="#2a1c1c">
<path d="M86 174 C96 167 118 165 129 173 L128 176 C118 169 98 170 87 177 Z"/>
<path d="M173 176 C184 168 206 166 218 173 L217 176 C206 170 186 170 174 179 Z"/>
</g>
<g stroke="#dcd4d2" stroke-width="1.7" fill="none">
<path d="M86 177.7 C93 173 100 170.8 107.5 170.8 C115 170.8 122 174 129 179 C122 183 115 186 107.5 186 C100 186 93 182 86 177.7 Z" fill="#5e4a48"/>
<path d="M84.6 172.9 C92 168 100 165.2 108.2 165.2 C116 165.2 124 169 130.3 174.2"/>
<circle cx="107.5" cy="177.7" r="7.4" fill="#3a2a2a"/>
<path d="M174.5 179.4 C181 174.5 188 171.5 194.5 171.5 C203 171.5 210 174 216.7 178.4 C210 183 203 186 195.2 186 C187 186 180 183 174.5 179.4 Z" fill="#5e4a48"/>
<path d="M172.4 174.2 C178 169 184 165.2 189.7 165.2 C200 165.2 210 168 218.8 172.9"/>
<circle cx="195.2" cy="177.7" r="7.4" fill="#3a2a2a"/>
</g>
<g fill="#e4dcda"><circle cx="107.5" cy="177.7" r="2.4"/><circle cx="195.2" cy="177.7" r="2.4"/></g>
<!-- nose -->
<g filter="url(#b2)">
<ellipse cx="151" cy="190" rx="7" ry="22" fill="#ecc0b0" opacity="0.6"/>
<ellipse cx="151" cy="226" rx="9" ry="8" fill="#e8b8a6" opacity="0.6"/>
<ellipse cx="128" cy="230" rx="7" ry="9" fill="#9a5e50" opacity="0.55"/>
<ellipse cx="175" cy="230" rx="7" ry="9" fill="#9a5e50" opacity="0.5"/>
<ellipse cx="151" cy="244" rx="12" ry="5" fill="#a86a5c" opacity="0.45"/>
</g>
<g fill="#5a3030" filter="url(#b1)"><ellipse cx="141" cy="234" rx="2.5" ry="1.8"/><ellipse cx="162" cy="234" rx="2.5" ry="1.8"/></g>
<g stroke="#e6dfdb" stroke-width="1.6" fill="none" stroke-linecap="round">
<path d="M142.6 171 L142.8 199"/><path d="M159.6 171 L159.4 199"/>
<path d="M133.5 216.3 C130 220 129.5 223 130 225.4 C130.5 230 131 233 132.4 234.5 C134.5 236 137 236.5 139.2 236.2"/>
<path d="M138 232.2 C138.5 230 139.5 229.4 140.9 229.4 C143 229.4 144.3 230 144.3 231 C144.6 232.5 144.9 233.5 144.9 234.5 C147 236.5 149 237.3 151.7 237.3 C154.5 237.3 157 236 158.5 234.5 C158.8 232 159.5 230 160.2 229.9 C161.5 229.5 163 229.5 163.6 229.9 C164.5 231 164.7 232 164.7 233.3"/>
<path d="M163.5 236.2 C166 236.5 168 235.5 169.8 234.5 C171.5 232 172.5 229 172.6 225.4 C172.6 222 171.5 219 169.8 216.3"/>
<path d="M140.3 214 L140.3 222 M162.4 214 L162.4 222"/>
<path d="M143.7 242 L143.7 249 M158.5 242 L158.5 249"/>
</g>
<!-- mouth -->
<g filter="url(#b3)">
<ellipse cx="151" cy="282" rx="25" ry="8" fill="#c06c6c" opacity="0.8"/>
</g>
<g filter="url(#b1)">
<path d="M112 263 C125 256 140 251 151 254 C162 251 178 256 191 264 C184 268 183 266 180 268 C170 280 132 280 122 268 C118 266 116 267 112 263 Z" fill="#4a2024"/>
<path d="M120 263.5 C130 257 140 253 143.2 253 C147 253 149 254.7 151.2 254.7 C153.5 254.7 156 253 159.3 253 C165 253 175 258 183.4 264 C170 262 160 261.5 151 261.5 C140 261.5 130 262 120 263.5 Z" fill="#a65058"/>
<path d="M124 264.5 C140 262.5 162 262.5 180 265 C176 270 170 273 160 274 C152 274.5 146 274.5 140 274 C132 273 127 269 124 264.5 Z" fill="#d8d0ce"/><path d="M134 265 L134 272 M142 264 L142 274 M151 264 L151 274 M160 264 L160 274 M168 265 L168 272" stroke="#a89a98" stroke-width="0.8"/>
<path d="M126 270 C137 276 165 276 177 270 C172 277 164 280 151 280 C138 280 131 277 126 270 Z" fill="#9a4a50"/>
</g>
<g stroke="#e6dcd8" stroke-width="1.7" fill="none">
<path d="M119.9 263.5 C126 259 135 254 143.2 253 C147 252.8 149 254.7 151.2 254.7 C153.5 254.7 156 252.8 159.3 253 C168 254 176 259 183.4 264 C176 273 165 280 151.2 280.4 C137 280 127 273 119.9 263.5 Z"/>
<path d="M123 264.5 C135 262.5 165 262.5 180 264.5"/>
</g>
<!-- earrings -->
<g filter="url(#b1)">
<circle cx="51" cy="262" r="7.5" fill="#ece8e6"/>
<circle cx="230" cy="268" r="5" fill="#ddd6d4"/>
</g>
<!-- outlines -->
<g stroke="#ebe4e1" stroke-width="1.6" fill="none">
<path d="M59 153 C60 175 60 190 61.5 203.7 C63 220 66 235 70.5 244.5 C76 262 83 275 91 283 C100 296 108 303 118 310 C128 316 140 320 152 320.4 C165 320 176 317 186 312.4 C197 305 205 297 213 287.5 C220 276 226 263 231.4 249 C236 235 239 220 240.5 203.7 C241 195 241 188 240.5 181"/>
<path d="M46 181 C44 176 48 170 53 172 C57 175 59 185 59 199 M46 181 C45 195 46 208 48 217 C51 226 55 233 57 235.6 C62 240 66 242 70 243"/>
<path d="M51 183 C50 195 51 204 54 211 C57 216 60 214 62 212"/>
<path d="M241.7 191.8 C243 189 245 188 247.2 188 C251 188 253.5 190 254.5 191.8 C256 195 256.5 199 256.3 202.7 C255.5 207 253.5 211 250.8 213.7 C248.5 216 246.5 218.5 245.4 221 C243.5 226 242 231 239.9 235.6 C238 239 236 241 234.4 243"/>
<path d="M246 196 C250 199 250 206 247 211"/>
<path d="M95 292 C95 310 94 330 91 353 C89 360 85 364 80 364 C70 365 60 365.5 51 365.5"/>
<path d="M208 289 C209 310 210 335 212 358.7 C214 362 217 364 220 364 C235 365 250 365.5 268 365.5"/>
<path d="M98 381.5 C115 384 130 388 145 388 C160 388 172 384 182 381.5"/>
</g>
</svg>
</div>

  <div id="dlg" class="abs" style="left:702px;top:409px;width:184px;height:213px;background:#fff;border-radius:2px">
    <div class="abs" style="left:0;top:4px;width:184px;text-align:center;font-size:15.8px;font-weight:bold;color:#a0a0a0">Change front picture</div>
    <div class="abs" style="left:0;top:25px;width:184px;height:1px;background:#e4e4e4"></div>
    <div class="abs" style="left:9px;top:35px;width:81px;height:20px;background:#efefef;border:1px solid #aaa;border-radius:2px;font-size:12.5px;line-height:18px;text-align:center;color:#222">Choose File</div>
    <div class="abs" style="left:94px;top:38px;font-size:12.5px;color:#222;white-space:nowrap">No file chosen</div>
    <div class="btn" style="left:9px;top:65px;width:166px;height:40px;line-height:40px;background:#337ab7;color:#fff;font-size:16px;border-radius:4px">Take Picture</div>
    <div class="btn" style="left:9px;top:114px;width:166px;height:40px;line-height:40px;background:#337ab7;color:#fff;font-size:16px;border-radius:4px">Use Template</div>
    <div class="btn" style="left:9px;top:163px;width:166px;height:40px;line-height:40px;background:#d9534f;color:#fff;font-size:16px;border-radius:4px">Cancel</div>
  </div>

  <div id="bb">
    <div class="abs" style="left:7px;top:7px;width:7px;height:7px;background:#262626;border-radius:1.5px"></div>
    <div class="abs" style="left:17px;top:7px;width:18px;height:7px;background:#262626;border-radius:1.5px"></div>
    <div class="abs" style="left:7px;top:16px;width:7px;height:7px;background:#262626;border-radius:1.5px"></div>
    <div class="abs" style="left:17px;top:16px;width:18px;height:7px;background:#262626;border-radius:1.5px"></div>
    <div class="abs" style="left:7px;top:25px;width:7px;height:7px;background:#262626;border-radius:1.5px"></div>
    <div class="abs" style="left:17px;top:25px;width:18px;height:7px;background:#262626;border-radius:1.5px"></div>
    <div class="abs" style="left:42px;top:5px;font-size:12.6px;color:#555;white-space:nowrap">Tap the product button to select one</div>
    <div class="abs" style="left:42px;top:20px;font-size:12.6px;color:#e8333a;white-space:nowrap">No product injected yet</div>
    <div class="btn def" style="left:449px;top:6px;width:47px"><i class="mi" style="left:10px"></i><span class="bt" style="left:22px">0.1</span></div>
    <div class="btn def" style="left:500px;top:6px;width:38px"><i class="mi" style="left:11px"></i><span class="bt" style="left:23px">1</span></div>
    <div class="abs" style="left:545px;top:6px;width:49px;text-align:center;font-size:11px;line-height:12px;color:#555">Quantity<br>N/A</div>
    <div class="btn def" style="left:600px;top:6px;width:38px"><i class="pl" style="left:9px"></i><span class="bt" style="left:23px">1</span></div>
    <div class="btn def" style="left:642px;top:6px;width:47px"><i class="pl" style="left:9px"></i><span class="bt" style="left:22px">0.1</span></div>
    <div class="sep" style="left:699px"></div>
    <div class="btn" style="left:708px;top:6px;width:72px;line-height:25px;background:#337ab7;color:#e6f0fa">Orientation</div>
    <div class="btn" style="left:784px;top:6px;width:58px;line-height:25px;background:#337ab7;color:#e6f0fa">Position</div>
    <div class="btn" style="left:846px;top:6px;width:51px;line-height:25px;background:#d9534f;color:#fbe8e8">Delete</div>
  </div>
</div>
</body></html>
